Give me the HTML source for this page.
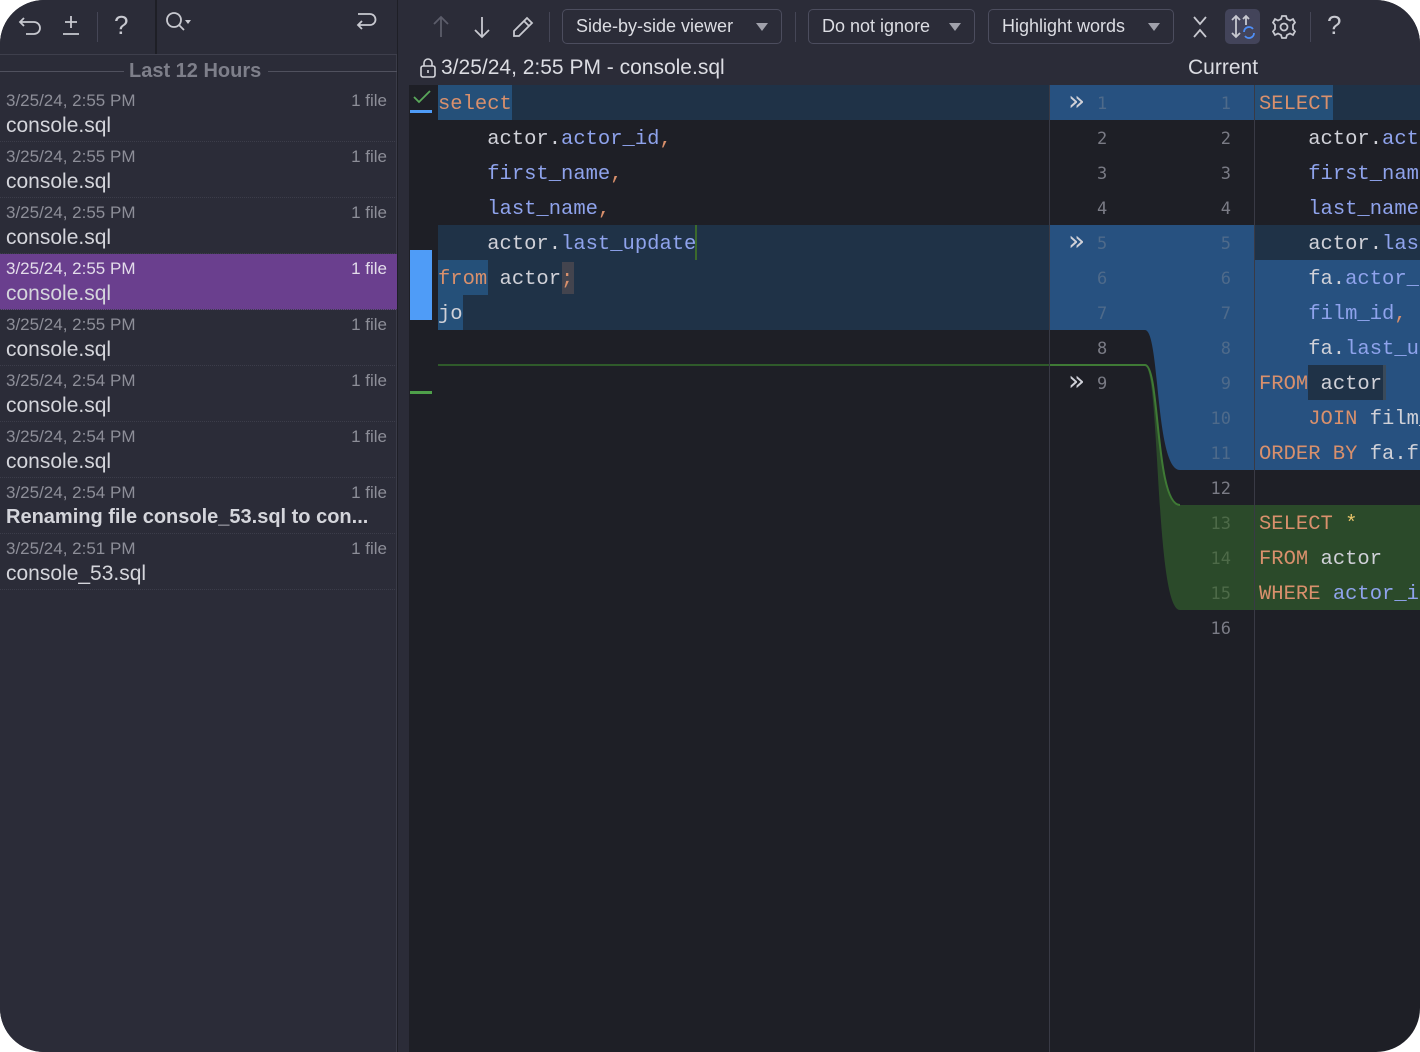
<!DOCTYPE html>
<html><head><meta charset="utf-8"><style>
*{margin:0;padding:0;box-sizing:border-box}
html,body{width:1420px;height:1052px;background:#fff;overflow:hidden}
#win{position:absolute;left:0;top:0;width:1420px;height:1052px;border-radius:44px;overflow:hidden;background:#1e1f26;font-family:"Liberation Sans",sans-serif}
.ab{position:absolute}
#left{left:0;top:0;width:397px;height:1052px;background:#2b2c38;border-right:1px solid #3a3b48}
.tb{color:#c8c9d0;font-size:24px}
.item{position:absolute;left:0;width:397px;height:56px;border-bottom:1px dotted #3c3d4a}
.item .d{position:absolute;left:6px;top:5px;font-size:17px;color:#8d8e98}
.item .f{position:absolute;right:10px;top:5px;font-size:17px;color:#8d8e98}
.item .n{position:absolute;left:6px;top:28px;font-size:21px;color:#d4d5db}
.sel{background:#6a3f8e}
.sel .d,.sel .f{color:#e3dcea}
#rtop{left:398px;top:0;width:1022px;height:85px;background:#2b2c38}
.btn{position:absolute;top:9px;height:35px;border:1px solid #4c4d5e;border-radius:5px;color:#dcdde3;font-size:18px;line-height:33px;padding-left:13px}
.btn:after{content:"";position:absolute;right:13px;top:13px;border-left:6px solid transparent;border-right:6px solid transparent;border-top:8px solid #a0a1ab}
.code{font-family:"Liberation Mono","DejaVu Sans Mono",monospace;font-size:20.5px;position:absolute;white-space:pre;line-height:35px;color:#d0d1d8}
.k{color:#d9906c}.v{color:#8fa3ec}.o{color:#d9906c}
.ln{position:absolute;font-family:"DejaVu Sans Mono",monospace;font-size:17px;color:#7a7b85;line-height:35px}
.dim{color:#4e6a8a}
.arr{position:absolute;left:1068px;font-size:28px;line-height:35px;color:#d0d1d8;font-family:"DejaVu Sans",sans-serif}
</style></head><body><div id="win">
<div id="left" class="ab">
 <div class="ab" style="left:0;top:54px;width:397px;height:1px;background:#3e3f4c"></div>
 <div class="ab" style="left:155px;top:0;width:242px;height:54px;background:#2b2c38;border-left:2px solid #1e1f26"></div>
 <svg class="ab" style="left:18px;top:12px" width="26" height="26" viewBox="0 0 26 26" fill="none" stroke="#c8c9d0" stroke-width="1.8"><path d="M6 6 L2 10 L6 14 M2 10 H16 A6 6 0 0 1 16 22 H8"/></svg>
 <svg class="ab" style="left:60px;top:12px" width="22" height="26" viewBox="0 0 22 26" fill="none" stroke="#c8c9d0" stroke-width="1.8"><path d="M11 4 V16 M5 10 H17 M3 22 H19"/></svg>
 <div class="ab" style="left:97px;top:12px;width:1px;height:30px;background:#454656"></div>
 <div class="ab tb" style="left:114px;top:10px;font-size:26px">?</div>
 <svg class="ab" style="left:164px;top:10px" width="30" height="26" viewBox="0 0 30 26" fill="none" stroke="#c8c9d0" stroke-width="1.8"><circle cx="10" cy="10" r="7"/><path d="M15 15 L20 20"/><path d="M21 10 L27 10 L24 14Z" fill="#c8c9d0" stroke="none"/></svg>
 <svg class="ab" style="left:354px;top:9px" width="26" height="26" viewBox="0 0 26 26" fill="none" stroke="#c8c9d0" stroke-width="1.8"><path d="M4 5 H16 A5.5 5.5 0 0 1 16 16 H4 M8 12 L4 16 L8 20"/></svg>
 <div class="ab" style="left:0;top:71px;width:124px;height:1px;background:#50515e"></div>
 <div class="ab" style="left:268px;top:71px;width:129px;height:1px;background:#50515e"></div>
 <div class="ab" style="left:129px;top:60px;font-size:20px;font-weight:bold;color:#7e7f8a">Last 12 Hours</div>
 <div class="item" style="top:86px"><span class="d">3/25/24, 2:55 PM</span><span class="f">1 file</span><span class="n">console.sql</span></div>
 <div class="item" style="top:142px"><span class="d">3/25/24, 2:55 PM</span><span class="f">1 file</span><span class="n">console.sql</span></div>
 <div class="item" style="top:198px"><span class="d">3/25/24, 2:55 PM</span><span class="f">1 file</span><span class="n">console.sql</span></div>
 <div class="item sel" style="top:254px"><span class="d">3/25/24, 2:55 PM</span><span class="f">1 file</span><span class="n">console.sql</span></div>
 <div class="item" style="top:310px"><span class="d">3/25/24, 2:55 PM</span><span class="f">1 file</span><span class="n">console.sql</span></div>
 <div class="item" style="top:366px"><span class="d">3/25/24, 2:54 PM</span><span class="f">1 file</span><span class="n">console.sql</span></div>
 <div class="item" style="top:422px"><span class="d">3/25/24, 2:54 PM</span><span class="f">1 file</span><span class="n">console.sql</span></div>
 <div class="item" style="top:478px"><span class="d">3/25/24, 2:54 PM</span><span class="f">1 file</span><span class="n" style="font-weight:bold;font-size:20px">Renaming file console_53.sql to con...</span></div>
 <div class="item" style="top:534px"><span class="d">3/25/24, 2:51 PM</span><span class="f">1 file</span><span class="n">console_53.sql</span></div>
</div>

<div id="rtop" class="ab">
 <svg class="ab" style="left:30px;top:14px" width="26" height="26" viewBox="0 0 26 26" fill="none" stroke="#5c5d6a" stroke-width="1.8"><path d="M13 3 V23 M6 10 L13 3 L20 10"/></svg>
 <svg class="ab" style="left:71px;top:14px" width="26" height="26" viewBox="0 0 26 26" fill="none" stroke="#c8c9d0" stroke-width="1.8"><path d="M13 3 V23 M6 16 L13 23 L20 16"/></svg>
 <svg class="ab" style="left:112px;top:14px" width="26" height="26" viewBox="0 0 26 26" fill="none" stroke="#c8c9d0" stroke-width="1.8"><path d="M17 4 L22 9 L9 22 L4 22 L4 17Z M14 7 L19 12"/></svg>
 <div class="ab" style="left:151px;top:12px;width:1px;height:30px;background:#454656"></div>
 <div class="btn" style="left:164px;width:220px">Side-by-side viewer</div>
 <div class="ab" style="left:397px;top:12px;width:1px;height:30px;background:#454656"></div>
 <div class="btn" style="left:410px;width:167px">Do not ignore</div>
 <div class="btn" style="left:590px;width:186px">Highlight words</div>
 <svg class="ab" style="left:792px;top:14px" width="20" height="26" viewBox="0 0 20 26" fill="none" stroke="#c8c9d0" stroke-width="1.8"><path d="M4 3 L10 10 L16 3 M4 23 L10 16 L16 23"/></svg>
 <div class="ab" style="left:827px;top:9px;width:35px;height:35px;background:#43445a;border-radius:5px"></div>
 <svg class="ab" style="left:831px;top:13px" width="28" height="28" viewBox="0 0 28 28" fill="none" stroke-width="1.8"><path d="M7 3 V24 M3 7 L7 3 L11 7 M3 20 L7 24 L11 20 M17 3 V12 M14 6 L17 3 L20 6" stroke="#c8c9d0"/><path d="M15 19 A5 5 0 0 1 24 16 M25 20 A5 5 0 0 1 16 23" stroke="#4f8ff7"/></svg>
 <svg class="ab" style="left:873px;top:14px" width="26" height="26" viewBox="0 0 26 26" fill="none" stroke="#c8c9d0" stroke-width="1.8"><circle cx="13" cy="13" r="3.5"/><path d="M11 2 H15 L16 5 L19 6.5 L22 5 L24 8.5 L22 11 V15 L24 17.5 L22 21 L19 19.5 L16 21 L15 24 H11 L10 21 L7 19.5 L4 21 L2 17.5 L4 15 V11 L2 8.5 L4 5 L7 6.5 L10 5Z"/></svg>
 <div class="ab" style="left:912px;top:12px;width:1px;height:30px;background:#454656"></div>
 <div class="ab tb" style="left:929px;top:10px;font-size:26px">?</div>
 <svg class="ab" style="left:21px;top:57px" width="18" height="22" viewBox="0 0 18 22" fill="none" stroke="#d4d5db" stroke-width="1.6"><rect x="2" y="9" width="14" height="11" rx="2"/><path d="M5 9 V6 A4 4 0 0 1 13 6 V9 M9 13 V16"/></svg>
 <div class="ab" style="left:43px;top:56px;font-size:21px;color:#dcdde3">3/25/24, 2:55 PM - console.sql</div>
 <div class="ab" style="left:790px;top:56px;font-size:21px;color:#dcdde3">Current</div>
</div>

<div class="ab" style="left:398px;top:85px;width:11px;height:967px;background:#2b2c38"></div>
<div class="ab" style="left:438px;top:85px;width:611px;height:35px;background:#1f3247"></div>
<div class="ab" style="left:438px;top:85px;width:74px;height:35px;background:#255079"></div>
<div class="ab" style="left:438px;top:225px;width:611px;height:105px;background:#1f3247"></div>
<div class="ab" style="left:438px;top:260px;width:50px;height:35px;background:#255079"></div>
<div class="ab" style="left:438px;top:295px;width:25px;height:35px;background:#255079"></div>
<div class="ab" style="left:562px;top:262px;width:12px;height:32px;background:#43444e"></div>
<div class="ab" style="left:695px;top:225px;width:2px;height:35px;background:#3c6a2c"></div>
<div class="ab" style="left:438px;top:364px;width:611px;height:2px;background:#2f5a2a"></div>
<div class="ab" style="left:410px;top:110px;width:22px;height:3px;background:#4f9cf7"></div>
<div class="ab" style="left:410px;top:250px;width:22px;height:70px;background:#4f9cf7"></div>
<div class="ab" style="left:410px;top:391px;width:22px;height:3px;background:#4fa04a"></div>
<svg class="ab" style="left:412px;top:89px" width="20" height="16" viewBox="0 0 20 16" fill="none" stroke="#5aa85a" stroke-width="1.8"><path d="M2 8 L7 13 L18 2"/></svg>
<div class="code" style="left:438px;top:87px"><span class="k">select</span>
    actor.<span class="v">actor_id</span><span class="o">,</span>
    <span class="v">first_name</span><span class="o">,</span>
    <span class="v">last_name</span><span class="o">,</span>
    actor.<span class="v">last_update</span>
<span class="k">from</span> actor<span class="o">;</span>
jo</div>

<div class="ab" style="left:1049px;top:85px;width:1px;height:967px;background:#393a45"></div>
<div class="ab" style="left:1254px;top:85px;width:1px;height:967px;background:#393a45"></div>
<svg class="ab" style="left:1050px;top:85px" width="204" height="540" viewBox="0 0 204 540">
 <rect x="0" y="0" width="204" height="35" fill="#275180"/>
 <path d="M0 140 H204 V385 H130 C105 385 110 245 95 245 H0Z" fill="#275180"/>
 <path d="M0 279 H95 C110 279 105 420 130 420 H204 V525 H130 C105 525 110 281 95 281 H0Z" fill="#2b4a2a"/>
 <path d="M0 280 H95 C110 280 105 420 130 420" stroke="#3f7a35" stroke-width="2" fill="none"/>
</svg>
<div class="arr" style="top:83px">»</div>
<div class="arr" style="top:223px">»</div>
<div class="arr" style="top:363px">»</div>
<div class="ln" style="left:1097px;top:87px;text-align:right"><span class="dim">1</span><br>2<br>3<br>4<br><span class="dim">5<br>6<br>7</span><br>8<br>9</div>
<div class="ln" style="left:1207px;top:87px;text-align:right;width:24px"><span class="dim">1</span><br>2<br>3<br>4<br><span class="dim">5<br>6<br>7<br>8<br>9<br>10<br>11</span><br>12<br><span style="color:#4d6a48">13<br>14<br>15</span><br>16</div>

<div class="ab" style="left:1255px;top:85px;width:165px;height:35px;background:#1f3247"></div>
<div class="ab" style="left:1255px;top:85px;width:78px;height:35px;background:#255079"></div>
<div class="ab" style="left:1255px;top:225px;width:165px;height:35px;background:#1f3247"></div>
<div class="ab" style="left:1255px;top:260px;width:165px;height:210px;background:#275180"></div>
<div class="ab" style="left:1308px;top:365px;width:75px;height:35px;background:#1f3247"></div>
<div class="ab" style="left:1383px;top:365px;width:3px;height:35px;background:#3a4a5a"></div>
<div class="ab" style="left:1255px;top:505px;width:165px;height:105px;background:#2b4a2a"></div>
<div class="code" style="left:1259px;top:87px"><span class="k">SELECT</span>
    actor.<span class="v">actor_id</span>
    <span class="v">first_name</span>
    <span class="v">last_name</span>
    actor.<span class="v">last_update</span>
    fa.<span class="v">actor_id</span>
    <span class="v">film_id</span><span class="o">,</span>
    fa.<span class="v">last_update</span>
<span class="k">FROM</span> actor
    <span class="k">JOIN</span> film_actor
<span class="k">ORDER BY</span> fa.film_id

<span class="k">SELECT</span> <span style="color:#e8c46a">*</span>
<span class="k">FROM</span> actor
<span class="k">WHERE</span> <span class="v">actor_id</span></div>
</div></body></html>
